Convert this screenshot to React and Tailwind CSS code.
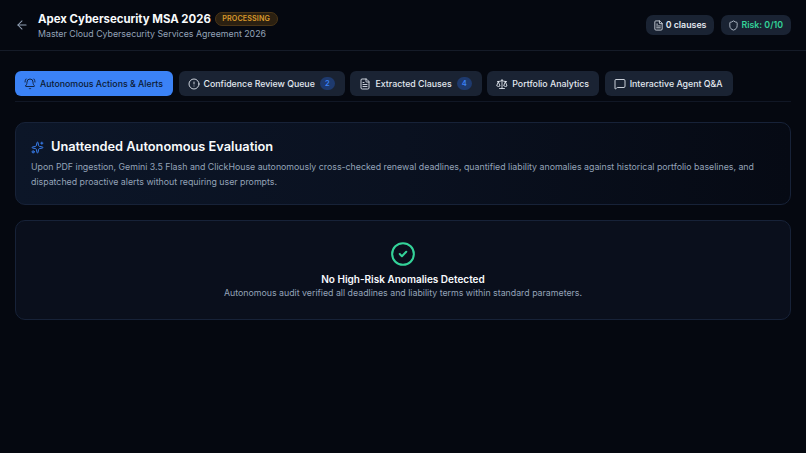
import React from "react";
import {
  ArrowLeft,
  BellRing,
  CircleAlert,
  FileText,
  Scale,
  MessageSquare,
  Sparkles,
  Shield,
  CircleCheck,
} from "lucide-react";

const tabs = [
  { label: "Autonomous Actions & Alerts", icon: BellRing, active: true },
  { label: "Confidence Review Queue", icon: CircleAlert, count: 2 },
  { label: "Extracted Clauses", icon: FileText, count: 4 },
  { label: "Portfolio Analytics", icon: Scale },
  { label: "Interactive Agent Q&A", icon: MessageSquare },
];

const Tab = ({ label, icon: Icon, active, count }) => (
  <div
    className={
      active
        ? "flex h-[25px] items-center gap-[4px] whitespace-nowrap rounded-[6px] bg-[#3b82f6] pl-[9px] pr-[10px] text-[8.8px] font-medium text-[#0b1a33]"
        : "flex h-[25px] items-center gap-[4px] whitespace-nowrap rounded-[6px] bg-[#1a2333] pl-[9px] pr-[10px] text-[8.8px] font-medium text-[#e2e8f0]"
    }
  >
    <Icon size={12} strokeWidth={1.75} />
    <span>{label}</span>
    {count && (
      <span className="ml-[1px] flex h-[13px] min-w-[15px] items-center justify-center rounded-full bg-[#1e3a6e] text-[7.5px] font-semibold text-[#3b82f6]">
        {count}
      </span>
    )}
  </div>
);

export default function App() {
  return (
    <div className="h-[453px] w-[806px] overflow-hidden bg-[#050810] font-['Inter',sans-serif]">
      <header className="flex h-[51px] items-center justify-between border-b border-[#151b28] px-[15px]">
        <div className="flex items-center gap-[9px]">
          <ArrowLeft size={14} strokeWidth={1.75} className="text-[#94a3b8]" />
          <div>
            <div className="mt-[1px] flex items-center gap-[4px]">
              <h1 className="text-[11.4px] font-bold leading-[16px] text-[#f8fafc]">
                Apex Cybersecurity MSA 2026
              </h1>
              <span className="rounded-full border border-[#4a3517] bg-[#2b2011] px-[6.5px] py-[1px] text-[7.2px] font-semibold leading-[10px] tracking-[0.1px] text-[#d9992b]">
                PROCESSING
              </span>
            </div>
            <p className="text-[8.8px] leading-[13px] text-[#94a3b8]">
              Master Cloud Cybersecurity Services Agreement 2026
            </p>
          </div>
        </div>
        <div className="flex items-center gap-[7px]">
          <div className="flex h-[20px] items-center gap-[2px] rounded-[7px] bg-[#1a2333] pl-[7px] pr-[8px] text-[8.8px] font-semibold text-[#e2e8f0]">
            <FileText size={11} strokeWidth={1.75} />
            0 clauses
          </div>
          <div className="flex h-[20px] items-center gap-[2px] rounded-[7px] bg-[#1a2333] pl-[7px] pr-[8px] text-[8.8px] font-semibold text-[#34d399]">
            <Shield size={11} strokeWidth={1.75} className="text-[#cbd5e1]" />
            Risk: 0/10
          </div>
        </div>
      </header>

      <main className="flex flex-col px-[15px] pt-[20px]">
        <nav className="flex gap-[5.6px] border-b border-[#111725] pb-[5px]">
          {tabs.map((t) => (
            <Tab key={t.label} {...t} />
          ))}
        </nav>

        <section className="mt-[20px] h-[83px] rounded-[10px] border border-[#172238] bg-gradient-to-r from-[#0c1628] via-[#0a1120] to-[#060a14] px-[15px] pt-[15px]">
          <div className="flex items-center gap-[7px]">
            <Sparkles size={13} strokeWidth={1.75} className="text-[#3b82f6]" />
            <h2 className="text-[12.8px] font-semibold leading-[18px] text-[#f8fafc]">
              Unattended Autonomous Evaluation
            </h2>
          </div>
          <p className="mt-[4px] text-[8.8px] leading-[14.5px] text-[#94a3b8]">
            Upon PDF ingestion, Gemini 3.5 Flash and ClickHouse autonomously cross-checked renewal deadlines, quantified liability anomalies against historical portfolio baselines, and dispatched proactive alerts without requiring user prompts.
          </p>
        </section>

        <section className="mt-[15px] flex h-[100px] flex-col items-center rounded-[10px] border border-[#172238] bg-[#0a0f1c] pt-[20px]">
          <CircleCheck size={26} strokeWidth={1.9} className="text-[#34d399]" />
          <h3 className="mt-[5px] text-[10px] font-semibold leading-[14px] text-[#f8fafc]">
            No High-Risk Anomalies Detected
          </h3>
          <p className="text-[8.8px] leading-[13px] text-[#94a3b8]">
            Autonomous audit verified all deadlines and liability terms within standard parameters.
          </p>
        </section>
      </main>
    </div>
  );
}
